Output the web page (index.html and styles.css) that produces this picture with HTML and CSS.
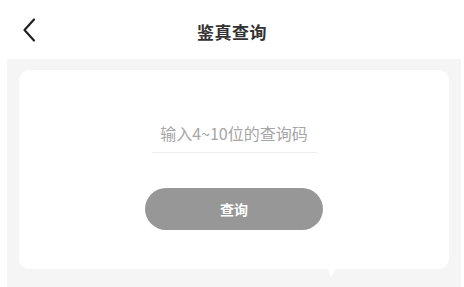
FILE: index.html
```html
<!DOCTYPE html>
<html lang="zh">
<head>
<meta charset="utf-8">
<link rel="stylesheet" href="styles.css">
</head>
<body>
<header class="nav">
  <span class="back"><svg width="14" height="26" viewBox="0 0 14 26"><path d="M12 2.5 L2.5 13 L12 23.5" fill="none" stroke="#222" stroke-width="2.2" stroke-linecap="round" stroke-linejoin="round"/></svg></span>
  <h1 class="title">鉴真查询</h1>
</header>
<main class="panel">
  <section class="card">
    <div class="field">输入4~10位的查询码</div>
    <button class="btn">查询</button>
    <span class="tail"></span>
  </section>
</main>
</body>
</html>
```
FILE: styles.css
```css
html, body { margin: 0; padding: 0; background: #fff; }
body { width: 464px; height: 287px; overflow: hidden; font-family: "Noto Sans CJK SC", "Noto Sans", sans-serif; }
.nav { height: 59px; position: relative; display: flex; align-items: center; justify-content: center; }
.back { position: absolute; left: 22px; top: 17px; display: block; line-height: 0; }
.title { margin: 0; font-size: 17px; font-weight: 700; color: #333; letter-spacing: 0.5px; margin-top: 4px; }
.panel { margin: 0 3px 0 7px; background: #f5f5f5; padding: 11px 12px 18px 12px; height: 228px; box-sizing: border-box; }
.card { position: relative; background: #fff; border-radius: 10px; height: 199px; display: flex; flex-direction: column; align-items: center; }
.field { margin-top: 52px; width: 165px; text-align: center; font-size: 16px; color: #a6a6a6; padding-bottom: 8px; border-bottom: 1px solid #eee; line-height: 22px; }
.btn { margin-top: 35px; width: 178px; height: 42px; border: none; border-radius: 21px; background: #979797; color: #fff; font-family: inherit; font-size: 14px; font-weight: 700; }
.tail { position: absolute; left: 309px; bottom: -9px; width: 0; height: 0; border-left: 3px solid transparent; border-right: 5px solid transparent; border-top: 10px solid #fff; }
```
